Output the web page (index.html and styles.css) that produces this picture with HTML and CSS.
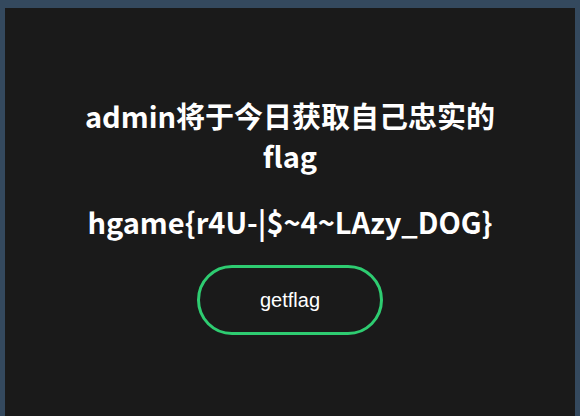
FILE: index.html
```html
<!DOCTYPE html>
<html lang="zh-CN">
<head>
    <meta charset="UTF-8">
    <title>getflag</title>
    <link rel="stylesheet" href="styles.css">
</head>
<body>
    <div class="panel">
        <div class="container">
            <h1 class="title">admin将于今日获取自己忠实的flag</h1>
            <h1 class="flag">hgame{r4U-|$~4~LAzy_DOG}</h1>
            <button class="btn" type="button">getflag</button>
        </div>
    </div>
</body>
</html>
```

FILE: styles.css
```css
body {
    margin: 0;
    padding: 8px 5px 0;
    background-color: #34495e;
    font-family: "Noto Sans CJK SC", sans-serif;
    height: 416px;
    box-sizing: border-box;
    overflow: hidden;
}
.panel {
    background-color: #1a1a1a;
    height: 100%;
    display: flex;
    justify-content: center;
}
.container {
    width: 430px;
    padding-top: 87px;
    text-align: center;
    color: #fff;
}
.title, .flag {
    font-size: 29px;
    font-weight: bold;
    line-height: 40px;
    margin: 0;
}
.flag {
    margin-top: 26px;
}
.btn {
    display: block;
    margin: 24px auto 0;
    width: 186px;
    height: 70px;
    border: 3px solid #2ecc71;
    border-radius: 35px;
    background-color: transparent;
    color: #fff;
    font-family: "Liberation Sans", Arial, sans-serif;
    font-size: 20px;
}
```
